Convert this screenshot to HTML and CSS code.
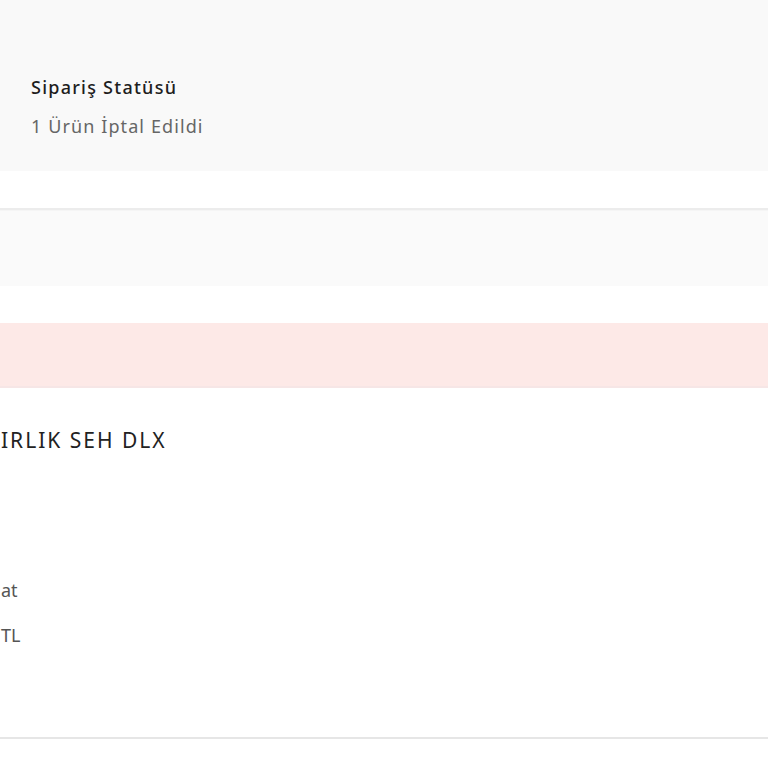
FILE: index.html
```html
<!DOCTYPE html>
<html lang="tr">
<head>
<meta charset="utf-8">
<link rel="stylesheet" href="styles.css">
</head>
<body>
<div class="page">
  <section class="status">
    <div class="status-title">Sipariş Statüsü</div>
    <div class="status-sub">1 Ürün İptal Edildi</div>
  </section>
  <div class="gap1"></div>
  <section class="band-gray"></section>
  <div class="gap2"></div>
  <section class="band-pink"></section>
  <section class="product">
    <div class="product-name">IRLIK SEH DLX</div>
    <div class="product-line l1">at</div>
    <div class="product-line l2">TL</div>
  </section>
  <div class="bottom"></div>
</div>
</body>
</html>
```
FILE: styles.css
```css
html, body {
  margin: 0;
  padding: 0;
  background: #ffffff;
}
.page {
  width: 768px;
  height: 768px;
  overflow: hidden;
  font-family: "Noto Sans", "DejaVu Sans", sans-serif;
}
.status {
  background: #f9f9f9;
  height: 171px;
  box-sizing: border-box;
  padding: 74px 0 0 31px;
}
.status-title {
  font-size: 18px;
  line-height: 26px;
  color: #1e1e1e;
  font-weight: 500;
  letter-spacing: 1.25px;
}
.status-sub {
  margin-top: 13px;
  font-size: 18px;
  line-height: 26px;
  color: #666666;
  letter-spacing: 1.1px;
}
.gap1 {
  height: 37px;
  border-bottom: 2px solid #ececec;
}
.band-gray {
  height: 75px;
  background: #fafafa;
  border-top: 1px solid #f5f5f5;
}
.gap2 {
  height: 37px;
}
.band-pink {
  height: 63px;
  background: #fde9e7;
  border-bottom: 2px solid #f6e6e6;
}
.product {
  height: 349px;
  box-sizing: border-box;
  padding-top: 38px;
  padding-left: 1px;
}
.product-name {
  font-size: 21px;
  line-height: 28px;
  color: #222222;
  letter-spacing: 2px;
}
.product-line {
  font-size: 18px;
  line-height: 24px;
  color: #555555;
}
.l1 {
  margin-top: 124px;
}
.l2 {
  margin-top: 21px;
}
.bottom {
  border-top: 2px solid #e6e6e6;
}
```
